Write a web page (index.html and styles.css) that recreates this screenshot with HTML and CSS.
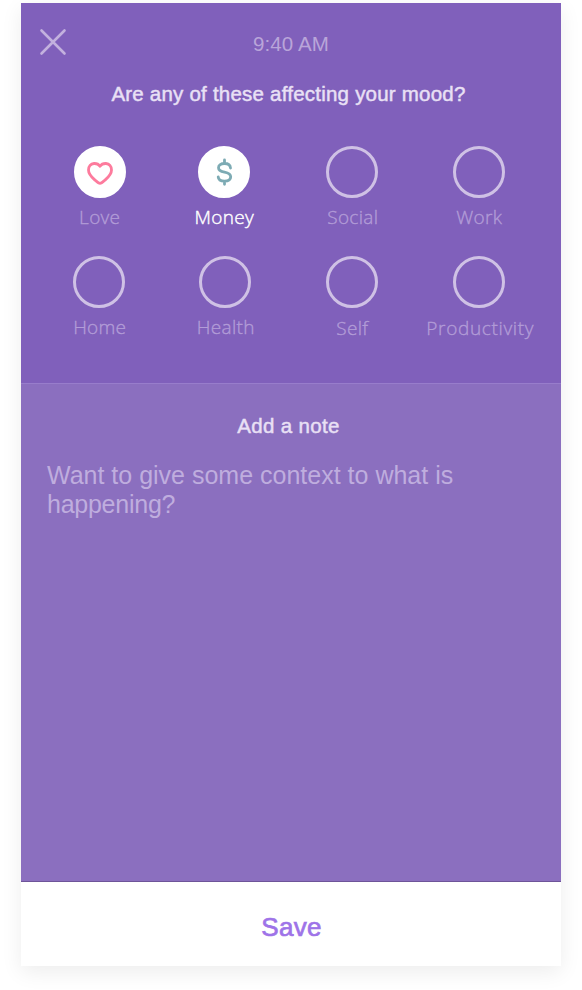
FILE: index.html
```html
<!DOCTYPE html>
<html lang="en">
<head>
<meta charset="utf-8">
<title>Mood</title>
<link rel="stylesheet" href="styles.css">
</head>
<body>
<main class="screen">
  <section class="factors">
    <header class="bar">
      <button class="close" aria-label="Close">
        <svg width="28" height="28" viewBox="0 0 28 28"><path d="M2.500 2.500 25.500 25.500M25.500 2.500 2.500 25.500"/></svg>
      </button>
      <span class="time">9:40 AM</span>
    </header>
    <h1 class="title"><span class="question">Are any of these affecting your mood?</span></h1>
    <div class="grid">
      <div class="item love"><span class="dot filled"><svg width="30" height="30" viewBox="0 -1.200 30 30"><path class="heart" d="M15 8.100C13.300 5.600 11 5.200 9 5.300 5.800 5.500 3.500 8 3.500 11.700c0 4.300 3.100 7.100 6 9.700 1.800 1.600 3.700 3.800 5.500 3.800s3.700-2.200 5.500-3.800c2.900-2.600 6-5.400 6-9.700 0-3.700-2.300-6.200-5.500-6.400-2-.1-4.300.3-6 2.800Z"/></svg></span><span class="label">Love</span></div>
      <div class="item money selected"><span class="dot filled"><svg width="30" height="30" viewBox="0 0 30 30"><path class="dollar" d="M15.500 3V6M15.500 24.500V27.300M21.500 11C21.300 8.200 19 6.500 15.500 6.500S9.500 8.100 9.500 10.700c0 3.100 2.900 3.800 6 4.400s6.200 1.400 6.200 4.600c0 2.800-2.600 4.400-6.200 4.400S9.400 22.500 9.200 19.800"/></svg></span><span class="label">Money</span></div>
      <div class="item"><span class="dot"></span><span class="label">Social</span></div>
      <div class="item"><span class="dot"></span><span class="label">Work</span></div>
      <div class="item"><span class="dot"></span><span class="label">Home</span></div>
      <div class="item health"><span class="dot"></span><span class="label">Health</span></div>
      <div class="item self"><span class="dot"></span><span class="label low">Self</span></div>
      <div class="item"><span class="dot"></span><span class="label low productivity">Productivity</span></div>
    </div>
  </section>
  <section class="note">
    <h2 class="title"><span class="note-title">Add a note</span></h2>
    <p class="placeholder"><span class="line-one">Want to give some context to what is</span><br><span class="line-two">happening?</span></p>
  </section>
  <button class="save">Save</button>
</main>
</body>
</html>
```

FILE: styles.css
```css
* { box-sizing: border-box; }
body { margin: 0; min-height: 990px; padding: 3px 0 0 21px; background: #fff; font-family: "Liberation Sans", Arial, sans-serif; }
button { border: 0; background: none; padding: 0; font: inherit; }
.screen { width: 540px; height: 963px; display: flex; flex-direction: column; background: #fff; box-shadow: 0 6px 20px rgba(0,0,0,.075); }
.factors { height: 380px; background: #8060bb; }
.bar { height: 78px; display: grid; grid-template-columns: 64px 1fr 64px; align-items: center; }
.close { width: 28px; height: 28px; margin-left: 18px; }
.close svg { display: block; fill: none; stroke: #c3b1de; stroke-width: 2.6; stroke-linecap: round; }
.time { text-align: center; margin: 4px 0 0 0; font-size: 20.500px; line-height: 24px; letter-spacing: .1px; color: #b9a5d9; }
.title { margin: 0; font-size: 20.500px; line-height: 24px; font-weight: 400; text-align: center; color: #e9e0f5; -webkit-text-stroke: .45px #e9e0f5; white-space: nowrap; padding-right: 5px; }
.question { letter-spacing: .22px; }
.note-title { letter-spacing: .35px; }
.factors .title { margin-top: 1px; }
.grid { display: grid; grid-template-columns: repeat(4, 126.500px); grid-template-rows: 110px 110px; margin: 40px 0 0 15.500px; }
.item { display: flex; flex-direction: column; align-items: center; }
.dot { width: 52px; height: 52px; border: 3px solid #cfc1e5; border-radius: 50%; flex: none; display: flex; align-items: center; justify-content: center; margin-right: 1px; }
.dot.filled { background: #fff; border-color: #fff; }
.item:nth-child(4n) .dot { margin-right: 0; }
.love .dot { margin: 0; }
.money .dot { margin-right: 4px; }
.health .dot { margin-right: 2px; }
.label { margin-top: 6px; font-family: "Open Sans", "Noto Sans", sans-serif; font-weight: 300; font-size: 19px; line-height: 26px; color: #b29cd7; -webkit-text-stroke: .35px #b29cd7; white-space: nowrap; letter-spacing: .3px; }
.low { margin-top: 7px; }
.productivity { letter-spacing: .65px; margin-right: -2px; }
.health .label, .self .label { margin-right: 1px; }
.money .label { margin-right: 4px; color: #fff; -webkit-text-stroke: .4px #fff; }
.heart { fill: none; stroke: #fd7b9d; stroke-width: 2.8; stroke-linejoin: round; }
.dollar { fill: none; stroke: #7dabb4; stroke-width: 2.8; stroke-linecap: round; }
.note { height: 499px; background: #8b6fbf; border-top: 1px solid #987dcb; border-bottom: 1px solid #6e5499; padding-top: 30px; }
.placeholder { margin: 23px 0 0 26px; font-size: 25px; line-height: 29px; color: #bfadde; white-space: nowrap; }
.line-two { letter-spacing: -.25px; }
.save { height: 84px; color: #9e73e8; font-size: 26px; line-height: 30px; -webkit-text-stroke: .7px #9e73e8; padding: 6px 0 0 1px; letter-spacing: .3px; }
```
